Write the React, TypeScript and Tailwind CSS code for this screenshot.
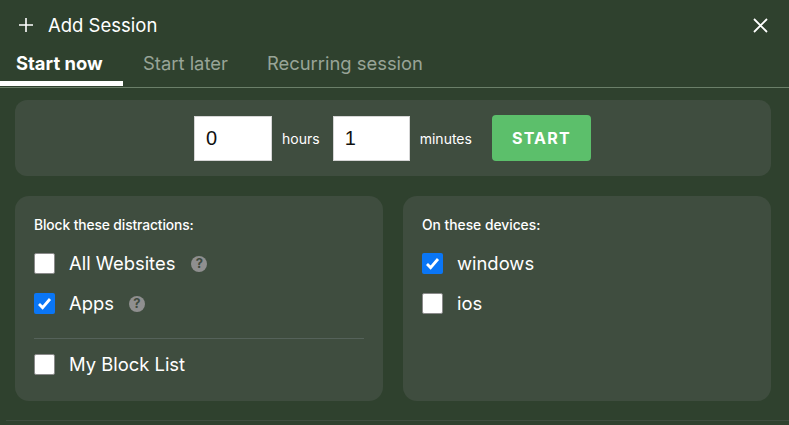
import React from "react";

function Box({ checked }: { checked?: boolean }) {
  return checked ? (
    <span className="flex h-[21px] w-[21px] shrink-0 items-center justify-center rounded-[2px] bg-[#0a76f6]">
      <svg width="15" height="13" viewBox="0 0 15 13" fill="none">
        <path d="M2 7l3.6 3.6L13 2" stroke="#fff" strokeWidth="2.8" />
      </svg>
    </span>
  ) : (
    <span className="h-[21px] w-[21px] shrink-0 rounded-[2px] border border-[#8a8a8a] bg-white" />
  );
}

function Help({ gap }: { gap: string }) {
  return (
    <span className={`${gap} flex h-4 w-4 items-center justify-center rounded-full bg-[#8f8f8f] text-[13px] leading-none font-bold text-[#3f4b3f]`}>
      ?
    </span>
  );
}

function Row({ label, checked, help }: { label: string; checked?: boolean; help?: string }) {
  return (
    <div className="flex h-[21px] items-center">
      <Box checked={checked} />
      <span className="ml-[14px] text-[18.4px] leading-[21px] text-white">{label}</span>
      {help && <Help gap={help} />}
    </div>
  );
}

export default function App() {
  return (
    <div className="h-[425px] w-[789px] overflow-hidden bg-[#2f412e] font-['Inter','Liberation_Sans',sans-serif] text-white">
      <div className="flex h-[50px] items-center justify-between pr-[21px] pl-[19px]">
        <div className="flex items-center">
          <svg width="14" height="14" viewBox="0 0 14 14" stroke="#fff" strokeWidth="1.6">
            <path d="M7 0v14M0 7h14" />
          </svg>
          <span className="ml-[15px] pt-[1px] text-[18.5px] leading-none">Add Session</span>
        </div>
        <svg width="15" height="15" viewBox="0 0 15 15" stroke="#fff" strokeWidth="1.8">
          <path d="M1 1l13 13M14 1L1 14" />
        </svg>
      </div>
      <div className="flex h-[38px] border-b border-[#6b7f69] text-[18.4px]">
        <div className="h-[36px] w-[123px] border-b-[5px] border-white pl-[16px] pt-[2px] font-bold leading-[22px]">Start now</div>
        <div className="ml-[20px] pt-[2px] leading-[22px] text-[#98a497]">Start later</div>
        <div className="ml-[39px] pt-[2px] leading-[22px] text-[#98a497]">Recurring session</div>
      </div>
      <div className="mt-[12px] mr-[18px] ml-[15px] flex h-[76px] items-center justify-center rounded-[12px] bg-[#3f4d3f] pr-[1px]">
        <div className="flex h-[45px] w-[78px] items-center border border-[#d5d5d5] bg-white pb-[1px] pl-[11px] font-['Liberation_Sans',sans-serif] text-[20px] text-[#111]">0</div>
        <span className="ml-[10px] text-[14px]">hours</span>
        <div className="ml-[13px] flex h-[45px] w-[77px] items-center border border-[#d5d5d5] bg-white pb-[1px] pl-[11px] font-['Liberation_Sans',sans-serif] text-[20px] text-[#111]">1</div>
        <span className="ml-[10px] text-[14px]">minutes</span>
        <div className="ml-[20px] flex h-[46px] w-[99px] items-center justify-center rounded-[4px] bg-[#5cbf6b] text-[16px] font-bold tracking-[1.2px]">START</div>
      </div>
      <div className="mt-[20px] mr-[18px] ml-[15px] flex h-[205px] gap-[20px]">
        <div className="flex-1 rounded-[14px] bg-[#3f4d3f] px-[19px] pt-[21px]">
          <div className="text-[13.8px] leading-[17px] font-medium tracking-[-0.1px]">Block these distractions:</div>
          <div className="mt-[19px] flex flex-col gap-[19px]">
            <Row label="All Websites" help="ml-[16px]" />
            <Row label="Apps" checked help="ml-[15px]" />
          </div>
          <div className="mt-[24px] h-px bg-[#55625a]" />
          <div className="mt-[15px]">
            <Row label="My Block List" />
          </div>
        </div>
        <div className="flex-1 rounded-[14px] bg-[#3f4d3f] px-[19px] pt-[21px]">
          <div className="text-[13.8px] leading-[17px] font-medium">On these devices:</div>
          <div className="mt-[19px] flex flex-col gap-[19px]">
            <Row label="windows" checked />
            <Row label="ios" />
          </div>
        </div>
      </div>
      <div className="mt-[19px] ml-[6px] h-px bg-[#3f4d3f]" />
    </div>
  );
}
